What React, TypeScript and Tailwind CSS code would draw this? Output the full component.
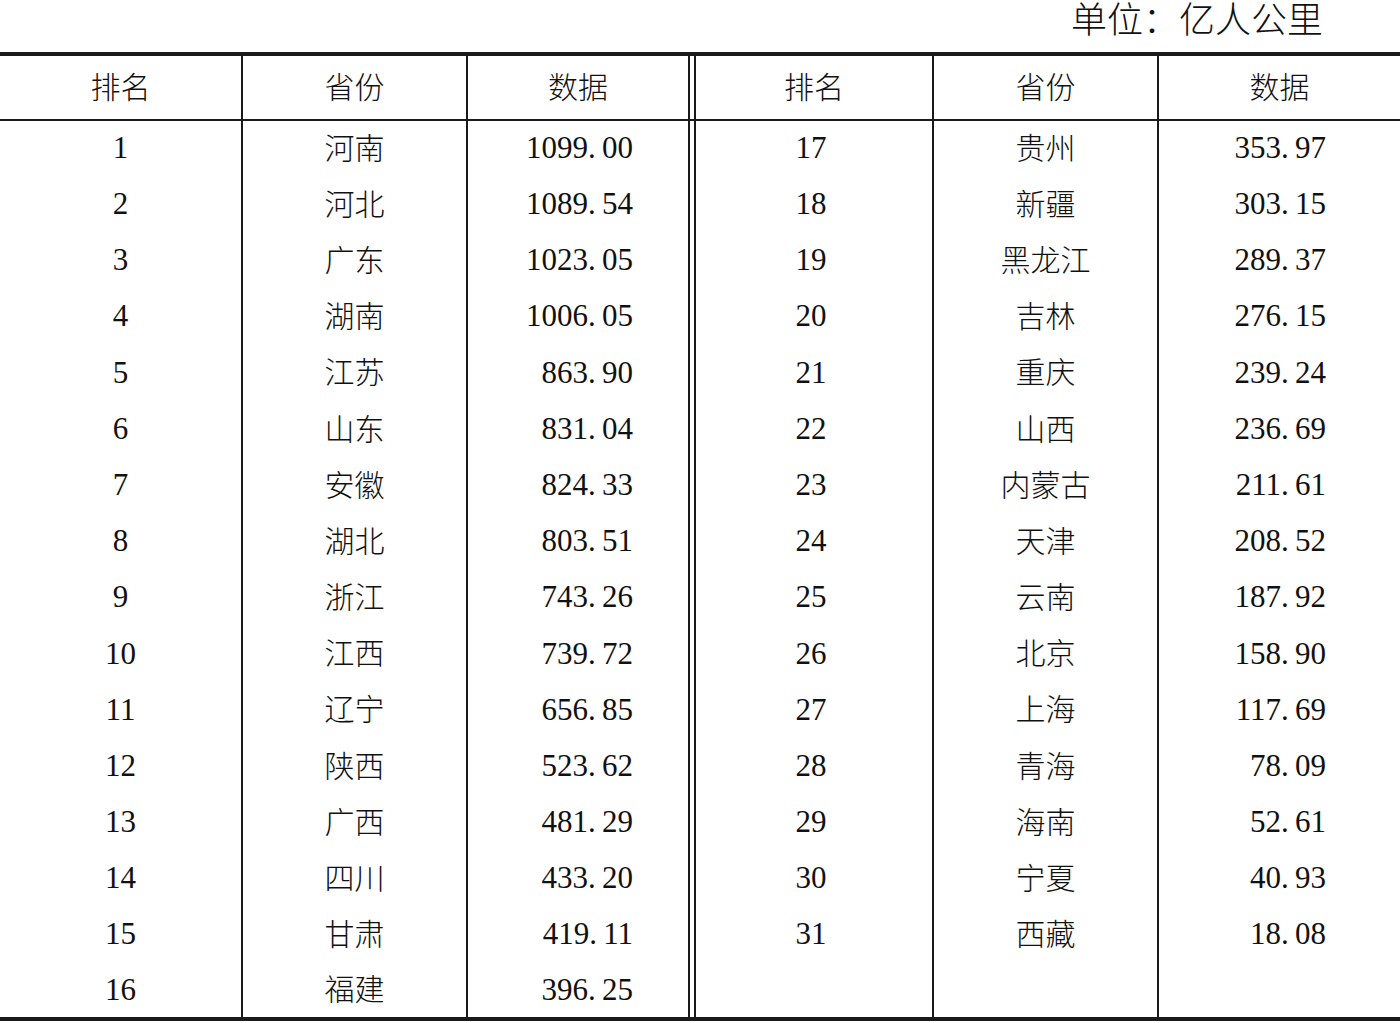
const left = [
  ['1', '河南', '1099.00'],
  ['2', '河北', '1089.54'],
  ['3', '广东', '1023.05'],
  ['4', '湖南', '1006.05'],
  ['5', '江苏', '863.90'],
  ['6', '山东', '831.04'],
  ['7', '安徽', '824.33'],
  ['8', '湖北', '803.51'],
  ['9', '浙江', '743.26'],
  ['10', '江西', '739.72'],
  ['11', '辽宁', '656.85'],
  ['12', '陕西', '523.62'],
  ['13', '广西', '481.29'],
  ['14', '四川', '433.20'],
  ['15', '甘肃', '419.11'],
  ['16', '福建', '396.25'],
]

const right = [
  ['17', '贵州', '353.97'],
  ['18', '新疆', '303.15'],
  ['19', '黑龙江', '289.37'],
  ['20', '吉林', '276.15'],
  ['21', '重庆', '239.24'],
  ['22', '山西', '236.69'],
  ['23', '内蒙古', '211.61'],
  ['24', '天津', '208.52'],
  ['25', '云南', '187.92'],
  ['26', '北京', '158.90'],
  ['27', '上海', '117.69'],
  ['28', '青海', '78.09'],
  ['29', '海南', '52.61'],
  ['30', '宁夏', '40.93'],
  ['31', '西藏', '18.08'],
  ['', '', ''],
]

function Num({ value }: { value: string }) {
  if (!value) return null
  const [int, frac] = value.split('.')
  return (
    <span className="text-[31px]">
      {int}
      <span className="inline-block w-[14px] text-left">.</span>
      {frac}
    </span>
  )
}

const cell = 'border-[#1a1a1a] p-0'

export default function App() {
  return (
    <div className="w-[1400px] h-[1023px] bg-white text-[#111] font-['Liberation_Serif','Noto_Sans_CJK_SC',serif] overflow-hidden">
      <div className="h-[52px] flex justify-end pr-[77px] pt-[2px]">
        <span className="text-[36px] leading-[38px] font-light">单位：亿人公里</span>
      </div>
      <table className="w-[1400px] table-fixed border-collapse">
        <colgroup>
          <col className="w-[242px]" />
          <col className="w-[225px]" />
          <col className="w-[222px]" />
          <col className="w-[6px]" />
          <col className="w-[238px]" />
          <col className="w-[225px]" />
          <col className="w-[242px]" />
        </colgroup>
        <thead>
          <tr className="h-[66px] border-t-4 border-b-2 border-[#1a1a1a] text-[30px]">
            <th className={`${cell} border-r-2 font-light`}>排名</th>
            <th className={`${cell} border-r-2 font-light`}>省份</th>
            <th className={`${cell} border-r-2 font-light`}>数据</th>
            <th className={`${cell} border-r-2`} />
            <th className={`${cell} border-r-2 font-light`}>排名</th>
            <th className={`${cell} border-r-2 font-light`}>省份</th>
            <th className={`${cell} font-light`}>数据</th>
          </tr>
        </thead>
        <tbody className="border-b-4 border-[#1a1a1a]">
          {left.map((l, i) => {
            const r = right[i]
            return (
              <tr key={l[0]} className="h-[56.2px]">
                <td className={`${cell} border-r-2 text-center text-[31px]`}>{l[0]}</td>
                <td className={`${cell} border-r-2 text-center text-[30px] font-light`}>{l[1]}</td>
                <td className={`${cell} border-r-2 text-right pr-[55px]`}>
                  <Num value={l[2]} />
                </td>
                <td className={`${cell} border-r-2`} />
                <td className={`${cell} border-r-2 text-center text-[31px] pr-[6px]`}>{r[0]}</td>
                <td className={`${cell} border-r-2 text-center text-[30px] font-light`}>{r[1]}</td>
                <td className={`${cell} text-right pr-[74px]`}>
                  <Num value={r[2]} />
                </td>
              </tr>
            )
          })}
        </tbody>
      </table>
    </div>
  )
}
